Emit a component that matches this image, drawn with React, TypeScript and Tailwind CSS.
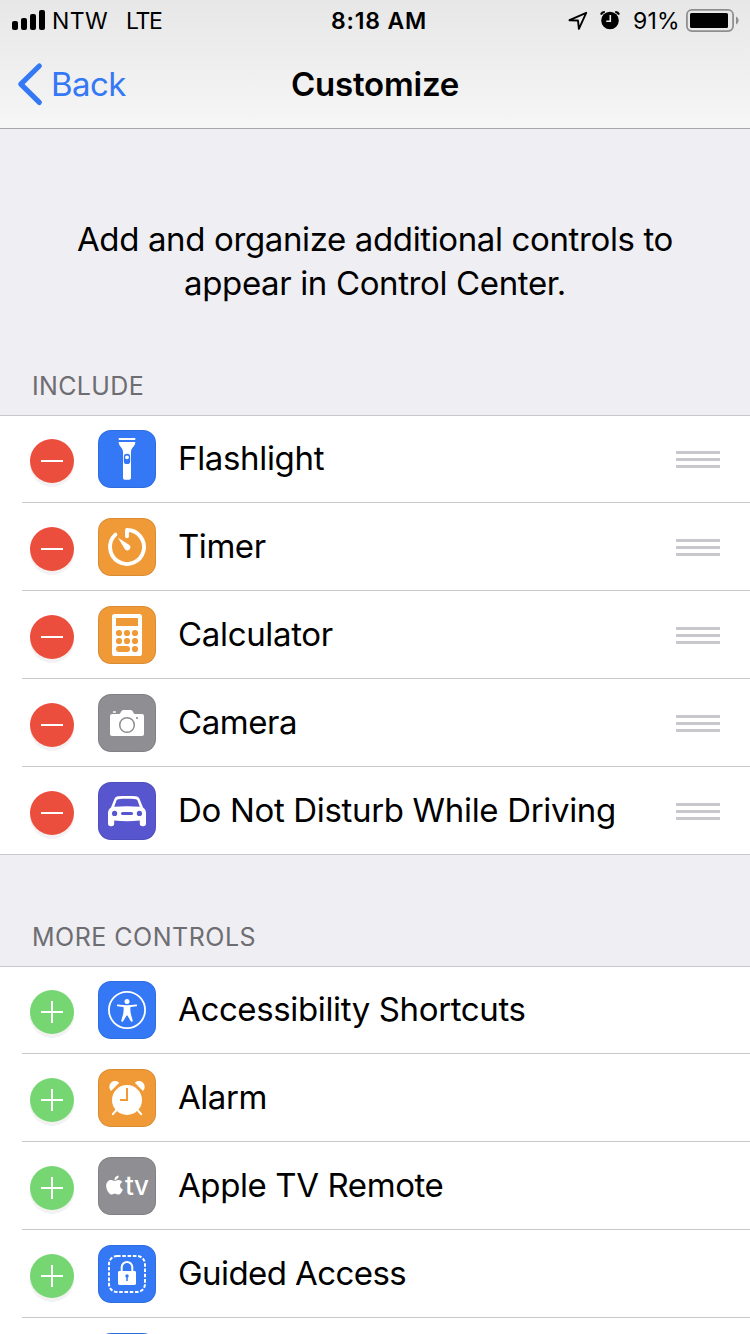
import type { ReactNode } from 'react'
import { FaApple } from 'react-icons/fa'

type Control = {
  label: string
  labelClass: string
  tile: string
  icon?: ReactNode
}

const BLUE = '#3478f6'
const ORANGE = '#f09a37'

function Glyph({ children }: { children: ReactNode }) {
  return (
    <svg viewBox="0 0 58 58" className="h-[58px] w-[58px]" fill="#fff" aria-hidden>
      {children}
    </svg>
  )
}

function FlashlightIcon() {
  return (
    <Glyph>
      <rect x="20.7" y="8" width="16.6" height="2" rx="0.5" />
      <path d="M20.7 12h16.6c0 4.6-4.3 5.6-4.3 10v26a1.7 1.7 0 0 1-1.7 1.7h-4.6a1.7 1.7 0 0 1-1.7-1.7V22c0-4.4-4.3-5.4-4.3-10z" />
      <rect x="25.8" y="23.7" width="6.4" height="10.4" rx="3.2" fill={BLUE} />
      <circle cx="29" cy="27.3" r="1.9" />
    </Glyph>
  )
}

function TimerIcon() {
  return (
    <Glyph>
      <path
        d="M29 18.2V12a17 17 0 1 1-11.6 4.6"
        fill="none"
        stroke="#fff"
        strokeWidth="3.9"
        strokeLinecap="round"
        strokeLinejoin="round"
      />
      <path d="M20 19.8l11.4 7.3a3 3 0 0 1-4.3 4.3z" />
    </Glyph>
  )
}

function CalculatorIcon() {
  return (
    <Glyph>
      <rect x="14" y="8" width="30" height="42" rx="2.6" />
      <g fill={ORANGE}>
        <rect x="18" y="12" width="22" height="8" rx="0.4" />
        {[27, 35].map((y) => [21, 29, 37].map((x) => <circle key={`${x}-${y}`} cx={x} cy={y} r="3.1" />))}
        <rect x="18" y="40" width="14" height="6" rx="3" />
        <circle cx="37" cy="43" r="3.1" />
      </g>
    </Glyph>
  )
}

function CameraIcon() {
  return (
    <Glyph>
      <path d="M14 20h7.2c1.4 0 1.8-4 4-4h7.6c2.2 0 2.6 4 4 4H44a2 2 0 0 1 2 2v18a2 2 0 0 1-2 2H14a2 2 0 0 1-2-2V22a2 2 0 0 1 2-2z" />
      <rect x="14.8" y="17.2" width="3.2" height="1.6" rx="0.5" />
      <circle cx="29" cy="31" r="7.3" fill="none" stroke="#8e8e93" strokeWidth="1.5" />
      <circle cx="39" cy="24" r="1.1" fill="#8e8e93" />
    </Glyph>
  )
}

function CarIcon() {
  return (
    <Glyph>
      <path
        fillRule="evenodd"
        d="M10 31c0-2.8 1.2-4.3 3-5.6l3.2-8c.8-2 2-2.8 4-3.1 5.8-.5 11.8-.5 17.6 0 2 .3 3.2 1.1 4 3.1l3.2 8c1.8 1.3 3 2.8 3 5.6v10.5a2.8 2.8 0 0 1-2.8 2.8h-.6a2.8 2.8 0 0 1-2.8-2.8V38.6c-8.4.8-17.2.8-25.6 0v2.9a2.8 2.8 0 0 1-2.8 2.8h-.6a2.8 2.8 0 0 1-2.8-2.8zM16.2 24.8c8.4-.9 17.2-.9 25.6 0l-2.3-6.2c-.3-.9-.8-1.3-1.7-1.4-5.8-.6-11.8-.6-17.6 0-.9.1-1.4.5-1.7 1.4z"
      />
      <g fill="#5756ce">
        <circle cx="16.6" cy="31.4" r="2.6" />
        <circle cx="41.4" cy="31.4" r="2.6" />
        <rect x="23" y="30" width="12" height="3" rx="1.5" />
      </g>
    </Glyph>
  )
}

function AccessibilityIcon() {
  return (
    <Glyph>
      <circle cx="29" cy="29" r="18.1" fill="none" stroke="#fff" strokeWidth="1.8" />
      <circle cx="29" cy="20.4" r="2.5" />
      <path d="M19.8 23.5c6 1 12.4 1 18.4 0 1.100-.1 1.300 1.500.3 1.700l-6 .9c-.3 2.700-.1 5 .5 7.300l1.700 6.200c.2 1.200-1.300 1.700-1.900.6L29.400 34.500h-.8l-3.400 5.700c-.6 1.100-2.100.6-1.900-.6l1.700-6.200c.6-2.300.8-4.600.5-7.300l-6-.9c-1-.2-.8-1.800.3-1.700z" />
    </Glyph>
  )
}

function AlarmIcon() {
  return (
    <Glyph>
      <path d="M13 21.9a5.7 5.7 0 0 1-.2-7.9c2.2-2.4 5.9-2.5 8.4-.3z" />
      <path d="M45 21.9a5.7 5.7 0 0 0 .2-7.9c-2.2-2.4-5.9-2.5-8.4-.3z" />
      <circle cx="29" cy="31" r="15" />
      <path d="M18.5 41l-3.7 4.2M39.5 41l3.7 4.2" stroke="#fff" strokeWidth="2" strokeLinecap="round" />
      <path d="M29 19v12h-7" fill="none" stroke={ORANGE} strokeWidth="2" />
    </Glyph>
  )
}

function AppleTvIcon() {
  return (
    <div className="flex h-[58px] w-[58px] items-start pt-[17px] pl-2 text-white">
      <FaApple className="h-[22px] w-[17px]" preserveAspectRatio="none" />
      <span className="ml-[2px] -mt-[2px] text-[26px] leading-[28px] font-medium tracking-[-0.3px]">tv</span>
    </div>
  )
}

function GuidedAccessIcon() {
  return (
    <Glyph>
      <rect
        x="11"
        y="11"
        width="36"
        height="36"
        rx="8"
        fill="none"
        stroke="#fff"
        strokeWidth="2"
        strokeDasharray="3.6 1.68"
      />
      <rect x="20" y="26" width="18" height="14" rx="1.4" />
      <path d="M23.7 26.5v-4.2a5.3 5.3 0 0 1 10.6 0v4.2" fill="none" stroke="#fff" strokeWidth="2" />
      <circle cx="29" cy="31" r="1.7" fill={BLUE} />
      <path d="M29 31v5" stroke={BLUE} strokeWidth="1.5" />
    </Glyph>
  )
}

const included: Control[] = [
  { label: 'Flashlight', labelClass: 'tracking-[-0.33px]', tile: 'bg-[#3478f6]', icon: <FlashlightIcon /> },
  { label: 'Timer', labelClass: 'tracking-[-0.45px]', tile: 'bg-[#f09a37]', icon: <TimerIcon /> },
  { label: 'Calculator', labelClass: 'tracking-[-0.33px]', tile: 'bg-[#f09a37]', icon: <CalculatorIcon /> },
  { label: 'Camera', labelClass: 'tracking-[-0.45px]', tile: 'bg-[#8e8e93]', icon: <CameraIcon /> },
  { label: 'Do Not Disturb While Driving', labelClass: 'tracking-[-0.33px]', tile: 'bg-[#5756ce]', icon: <CarIcon /> },
]

const more: Control[] = [
  { label: 'Accessibility Shortcuts', labelClass: 'tracking-[-0.37px]', tile: 'bg-[#3478f6]', icon: <AccessibilityIcon /> },
  { label: 'Alarm', labelClass: 'tracking-[-0.45px]', tile: 'bg-[#f09a37]', icon: <AlarmIcon /> },
  { label: 'Apple TV Remote', labelClass: 'tracking-[-0.4px]', tile: 'bg-[#8e8e93]', icon: <AppleTvIcon /> },
  { label: 'Guided Access', labelClass: 'tracking-[-0.57px]', tile: 'bg-[#3478f6]', icon: <GuidedAccessIcon /> },
  { label: '', labelClass: '', tile: 'bg-[#3478f6]' },
]

function StatusBar() {
  return (
    <div className="grid h-10 grid-cols-3 text-[23px] leading-[42px]">
      <div className="flex pl-3">
        <svg viewBox="0 0 34 40" className="h-10 w-[34px]" aria-hidden>
          <rect x="0" y="21" width="6" height="9" rx="2" />
          <rect x="9" y="18" width="6" height="12" rx="2" />
          <rect x="18" y="14" width="6" height="16" rx="2" />
          <rect x="27" y="10" width="6" height="20" rx="2" />
        </svg>
        <span className="ml-[6px] tracking-[0.4px]">NTW</span>
        <span className="ml-[18px] tracking-[-1.3px]">LTE</span>
      </div>
      <div className="pl-2 text-center font-semibold tracking-[0.85px]">8:18 AM</div>
      <div className="flex justify-end pr-[10px]">
        <svg viewBox="0 0 54 40" className="mr-[12px] h-10 w-[54px]" aria-hidden>
          <path
            d="M2.500 20.200L19.200 12.800 11.900 28.800l-.9-8.300z"
            fill="none"
            stroke="#000"
            strokeWidth="1.9"
            strokeLinejoin="round"
          />
          <circle cx="43" cy="20.5" r="8.8" />
          <path d="M34 14.600a4 4 0 0 1 3.800-2.600M52 14.600a4 4 0 0 0-3.800-2.600" fill="none" stroke="#000" strokeWidth="2" />
          <path d="M43.300 15v6.300h-4" fill="none" stroke="#ececec" strokeWidth="1.600" />
        </svg>
        <span className="mr-[6px] tracking-[0.3px]">91%</span>
        <svg viewBox="0 0 54 40" className="h-10 w-[54px]" aria-hidden>
          <rect x="0.9" y="9.9" width="46.2" height="21.2" rx="5" fill="none" stroke="#8f8f8f" strokeWidth="1.8" />
          <rect x="4" y="13" width="38" height="15" rx="1.5" />
          <path d="M50 16.500c3.400 1.600 3.400 6.400 0 8z" fill="#8f8f8f" />
        </svg>
      </div>
    </div>
  )
}

function NavBar() {
  return (
    <div className="grid h-[88px] grid-cols-3 text-[33px] leading-[88px]">
      <button type="button" className="flex pl-[16px] text-left text-[#3478f6]">
        <svg viewBox="0 0 28 88" className="h-[88px] w-[28px]" fill="none" aria-hidden>
          <path d="M23.3 26L4.8 44.2 23.3 62.4" stroke={BLUE} strokeWidth="5.2" strokeLinecap="round" strokeLinejoin="round" />
        </svg>
        <span className="ml-[7px] tracking-[-0.6px]">Back</span>
      </button>
      <h1 className="text-center font-semibold tracking-[-0.2px]">Customize</h1>
    </div>
  )
}

function Toggle({ kind }: { kind: 'remove' | 'add' }) {
  return (
    <span
      className={[
        'mt-[24px] ml-2 h-11 w-11 shrink-0 rounded-full shadow-[0_4px_0_#f2f2f2]',
        kind === 'remove' ? 'bg-[#eb4e3d]' : 'bg-[#76d672]',
      ].join(' ')}
    >
      <svg viewBox="0 0 44 44" className="h-11 w-11" stroke="#fff" strokeWidth="2" aria-hidden>
        <path d={kind === 'remove' ? 'M11 22h22' : 'M11 22h22M22 11v22'} />
      </svg>
    </span>
  )
}

function ControlList({ items, kind }: { items: Control[]; kind: 'remove' | 'add' }) {
  return (
    <ul className="border-t border-[#c8c7cc] bg-white">
      {items.map((item, index) => (
        <li
          key={item.label}
          className={[
            'flex h-[88px] items-start border-b border-[#c8c7cc] first:-mt-px',
            kind === 'remove' && index === items.length - 1 ? 'pl-[22px]' : 'ml-[22px]',
          ].join(' ')}
        >
          <Toggle kind={kind} />
          <span
            className={[
              'mt-[15px] ml-6 h-[58px] w-[58px] shrink-0 overflow-hidden rounded-[13px] shadow-[inset_0_0_0_1px_rgba(0,0,0,0.09)]',
              item.tile,
            ].join(' ')}
          >
            {item.icon}
          </span>
          <span className={['mt-[21px] ml-[22px] grow text-[33px] leading-[44px] whitespace-nowrap', item.labelClass].join(' ')}>
            {item.label}
          </span>
          {kind === 'remove' && (
            <span className="mt-[36px] mr-[30px] grid w-11 shrink-0 gap-1">
              <span className="h-[3px] bg-[#c7c7cc]" />
              <span className="h-[3px] bg-[#c7c7cc]" />
              <span className="h-[3px] bg-[#c7c7cc]" />
            </span>
          )}
        </li>
      ))}
    </ul>
  )
}

export default function App() {
  return (
    <div className="h-[1334px] w-[750px] overflow-hidden bg-[#efeef3] font-['Inter','Liberation_Sans',sans-serif] text-black">
      <header className="h-[129px] border-b border-[#a8a8ac] bg-linear-to-b from-[#e7e7e7] to-[#f6f6f6]">
        <StatusBar />
        <NavBar />
      </header>

      <p className="mt-[88px] text-center text-[33px] leading-[44px] tracking-[-0.37px]">
        Add and organize additional controls to
        <br />
        appear in Control Center.
      </p>

      <h2 className="mt-[65px] h-[45px] pl-8 text-[25px] leading-[32px] tracking-[0.35px] text-[#6d6d72]">INCLUDE</h2>
      <ControlList items={included} kind="remove" />

      <h2 className="mt-[66px] h-[45px] pl-8 text-[25px] leading-[32px] tracking-[0.5px] text-[#6d6d72]">MORE CONTROLS</h2>
      <ControlList items={more} kind="add" />
    </div>
  )
}
